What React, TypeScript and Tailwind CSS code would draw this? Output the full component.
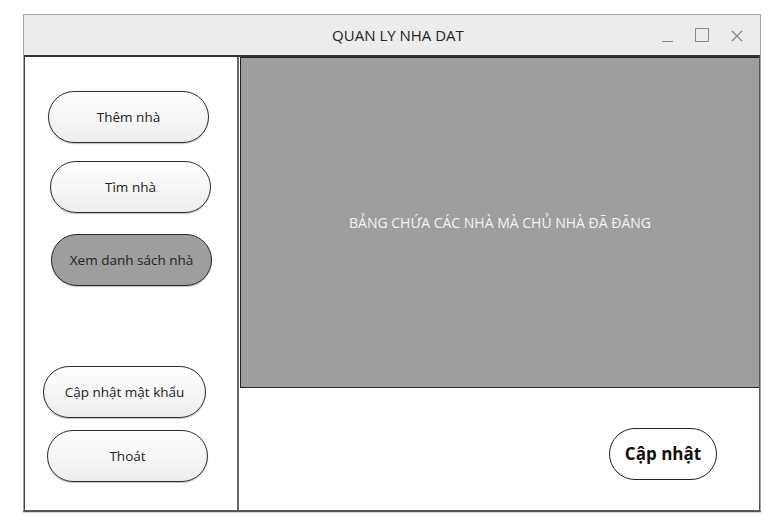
import type { ReactNode } from "react"

const font = { fontFamily: '"Open Sans", "Noto Sans", sans-serif' }

function Pill({
  children,
  className = "",
}: {
  children: ReactNode
  className?: string
}) {
  return (
    <div
      className={`h-[52px] w-[161px] rounded-full border border-[#2b2b2b] bg-gradient-to-b from-white to-[#ededed] shadow-[0_1px_1px_rgba(0,0,0,0.25)] flex items-center justify-center text-[13.5px] text-[#222] ${className}`}
    >
      {children}
    </div>
  )
}

export default function App() {
  return (
    <div className="w-[782px] h-[526px] bg-white pt-[14px] pl-[23px]" style={font}>
      <div className="w-[738px] h-[498px] flex flex-col border border-[#a8a8a8] border-b-[#555] border-b-2 shadow-[0_1px_1px_rgba(0,0,0,0.15)]">
        {/* title bar */}
        <div className="h-[42px] shrink-0 bg-[#ececec] border-b-2 border-[#333] grid grid-cols-[1fr_auto_1fr] items-center">
          <div />
          <div className="pl-[12px] text-[15px] text-[#222]">QUAN LY NHA DAT</div>
          <div className="flex justify-end items-center gap-[22px] pr-[17px]">
            <div className="w-[11px] h-[14px] flex items-end">
              <div className="w-full h-[1.5px] bg-[#8a8a8a]" />
            </div>
            <div className="w-[14px] h-[14px] border-[1.5px] border-[#8a8a8a]" />
            <svg width="12" height="12" viewBox="0 0 12 12" className="mt-[1px]">
              <path d="M1 1 L11 11 M11 1 L1 11" stroke="#8a8a8a" strokeWidth="1.4" />
            </svg>
          </div>
        </div>
        {/* body */}
        <div className="flex flex-1 min-h-0 border-l border-[#444]">
          <div className="w-[214px] shrink-0 border-r-2 border-[#666] flex flex-col pt-[34px]">
            <Pill className="ml-[23px]">Thêm nhà</Pill>
            <Pill className="ml-[25px] mt-[18px]">Tìm nhà</Pill>
            <Pill className="ml-[26px] mt-[21px] !bg-none !bg-[#9e9e9e]">Xem danh sách nhà</Pill>
            <Pill className="ml-[18px] mt-[80px] w-[163px]">Cập nhật mật khẩu</Pill>
            <Pill className="ml-[22px] mt-[12px]">Thoát</Pill>
          </div>
          <div className="flex-1 flex flex-col min-w-0 pl-[1px] border-r border-[#555]">
            <div className="h-[331px] shrink-0 bg-[#9e9e9e] border border-[#222] border-r-0 flex items-center justify-center">
              <span className="text-[14px] text-[#f4f4f4]">BẢNG CHỨA CÁC NHÀ MÀ CHỦ NHÀ ĐÃ ĐĂNG</span>
            </div>
            <div className="flex-1 flex justify-end items-start pt-[40px] pr-[42px]">
              <div className="h-[52px] w-[108px] rounded-full border border-[#222] bg-white flex items-center justify-center text-[17px] font-bold text-[#111]">
                Cập nhật
              </div>
            </div>
          </div>
        </div>
      </div>
    </div>
  )
}
